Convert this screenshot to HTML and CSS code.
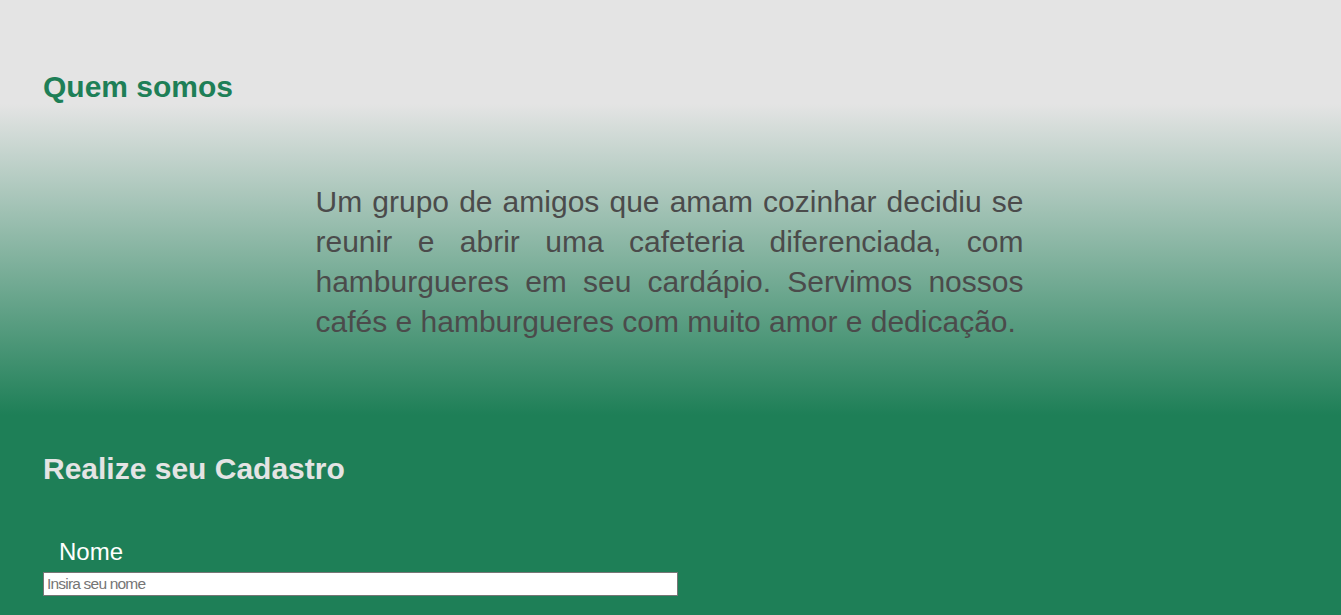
FILE: index.html
```html
<!DOCTYPE html>
<html lang="pt-BR">
<head>
<meta charset="utf-8">
<title>Quem somos</title>
<link rel="stylesheet" href="styles.css">
</head>
<body>
<section class="about-head">
  <h2 class="about-title">Quem somos</h2>
</section>
<section class="about-body">
  <p class="about-text">Um grupo de amigos que amam cozinhar decidiu se reunir e abrir uma cafeteria diferenciada, com hamburgueres em seu cardápio. Servimos nossos cafés e hamburgueres com muito amor e dedicação.</p>
</section>
<section class="signup">
  <h2 class="signup-title">Realize seu Cadastro</h2>
  <form class="signup-form">
    <label class="field-label" for="nome">Nome</label>
    <input class="field-input" id="nome" type="text" placeholder="Insira seu nome">
  </form>
</section>
</body>
</html>
```

FILE: styles.css
```css
html, body {
  margin: 0;
  padding: 0;
}

body {
  background: #1e7f57;
  font-family: "Liberation Sans", Arial, sans-serif;
}

.about-head {
  background: #e4e4e4;
  padding: 70px 43px 0;
  height: 34px;
}

.about-title {
  margin: 0;
  font-size: 30px;
  line-height: 34px;
  font-weight: bold;
  color: #1e7f57;
}

.about-body {
  background: linear-gradient(to bottom, #e4e4e4 0%, #1e7f57 100%);
  padding: 78px 2px 73px 0;
}

.about-text {
  margin: 0 auto;
  width: 708px;
  font-size: 30px;
  line-height: 40px;
  text-align: justify;
  color: #4b4b4b;
}

.signup {
  padding: 37px 43px 20px;
}

.signup-title {
  margin: 0;
  font-size: 30px;
  line-height: 34px;
  font-weight: bold;
  color: #e4e4e4;
}

.signup-form {
  display: flex;
  flex-direction: column;
  align-items: flex-start;
  gap: 7px;
  margin-top: 53px;
}

.field-label {
  padding-left: 16px;
  font-size: 24px;
  line-height: 26px;
  color: #ffffff;
}

.field-input {
  box-sizing: border-box;
  width: 635px;
  height: 24px;
  margin: 0;
  padding: 1px 3px;
  border: 1px solid #767676;
  background: #ffffff;
  font-family: "Liberation Sans Narrow", "Arial Narrow", "Liberation Sans", sans-serif;
  font-size: 15.5px;
  letter-spacing: -0.8px;
  color: #333;
}

.field-input::placeholder {
  color: #757575;
}
```
